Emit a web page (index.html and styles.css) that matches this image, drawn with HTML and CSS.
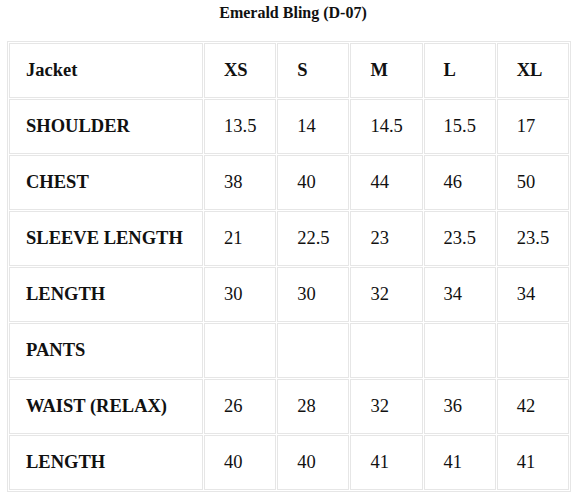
FILE: index.html
```html
<!DOCTYPE html>
<html>
<head>
<meta charset="utf-8">
<link rel="stylesheet" href="styles.css">
</head>
<body>
<div class="wrap">
  <h1 class="title">Emerald Bling (D-07)</h1>
  <table class="size-table">
    <colgroup>
      <col class="c-label"><col><col><col><col><col>
    </colgroup>
    <tr class="b"><td class="first">Jacket</td><td>XS</td><td>S</td><td>M</td><td>L</td><td>XL</td></tr>
    <tr><td class="first lbl">SHOULDER</td><td>13.5</td><td>14</td><td>14.5</td><td>15.5</td><td>17</td></tr>
    <tr><td class="first lbl">CHEST</td><td>38</td><td>40</td><td>44</td><td>46</td><td>50</td></tr>
    <tr><td class="first lbl">SLEEVE LENGTH</td><td>21</td><td>22.5</td><td>23</td><td>23.5</td><td>23.5</td></tr>
    <tr><td class="first lbl">LENGTH</td><td>30</td><td>30</td><td>32</td><td>34</td><td>34</td></tr>
    <tr><td class="first lbl">PANTS</td><td></td><td></td><td></td><td></td><td></td></tr>
    <tr><td class="first lbl">WAIST (RELAX)</td><td>26</td><td>28</td><td>32</td><td>36</td><td>42</td></tr>
    <tr><td class="first lbl">LENGTH</td><td>40</td><td>40</td><td>41</td><td>41</td><td>41</td></tr>
  </table>
</div>
</body>
</html>
```
FILE: styles.css
```css
html, body {
  margin: 0;
  padding: 0;
  background: #fff;
}
body {
  font-family: "Liberation Serif", "Times New Roman", serif;
  color: #111;
}
.wrap {
  padding: 4px 7px 0 7px;
}
.title {
  margin: 0 0 20px 0;
  font-family: "Liberation Serif", "Times New Roman", serif;
  font-size: 16px;
  line-height: 17px;
  font-weight: bold;
  text-align: center;
}
.size-table {
  width: 564px;
  border-collapse: separate;
  border-spacing: 1px;
  border: 1px solid #e6e6e6;
  table-layout: fixed;
  font-family: "Liberation Serif", "Times New Roman", serif;
  font-size: 18.5px;
}
.c-label { width: 194px; }
.size-table td {
  font-family: "Liberation Serif", "Times New Roman", serif;
  border: 1px solid #e6e6e6;
  height: 53px;
  padding: 0 0 0 19px;
  vertical-align: middle;
  white-space: nowrap;
}
.size-table td.first {
  padding-left: 16px;
}
.size-table tr.b td,
.size-table td.lbl {
  font-weight: bold;
}
```
